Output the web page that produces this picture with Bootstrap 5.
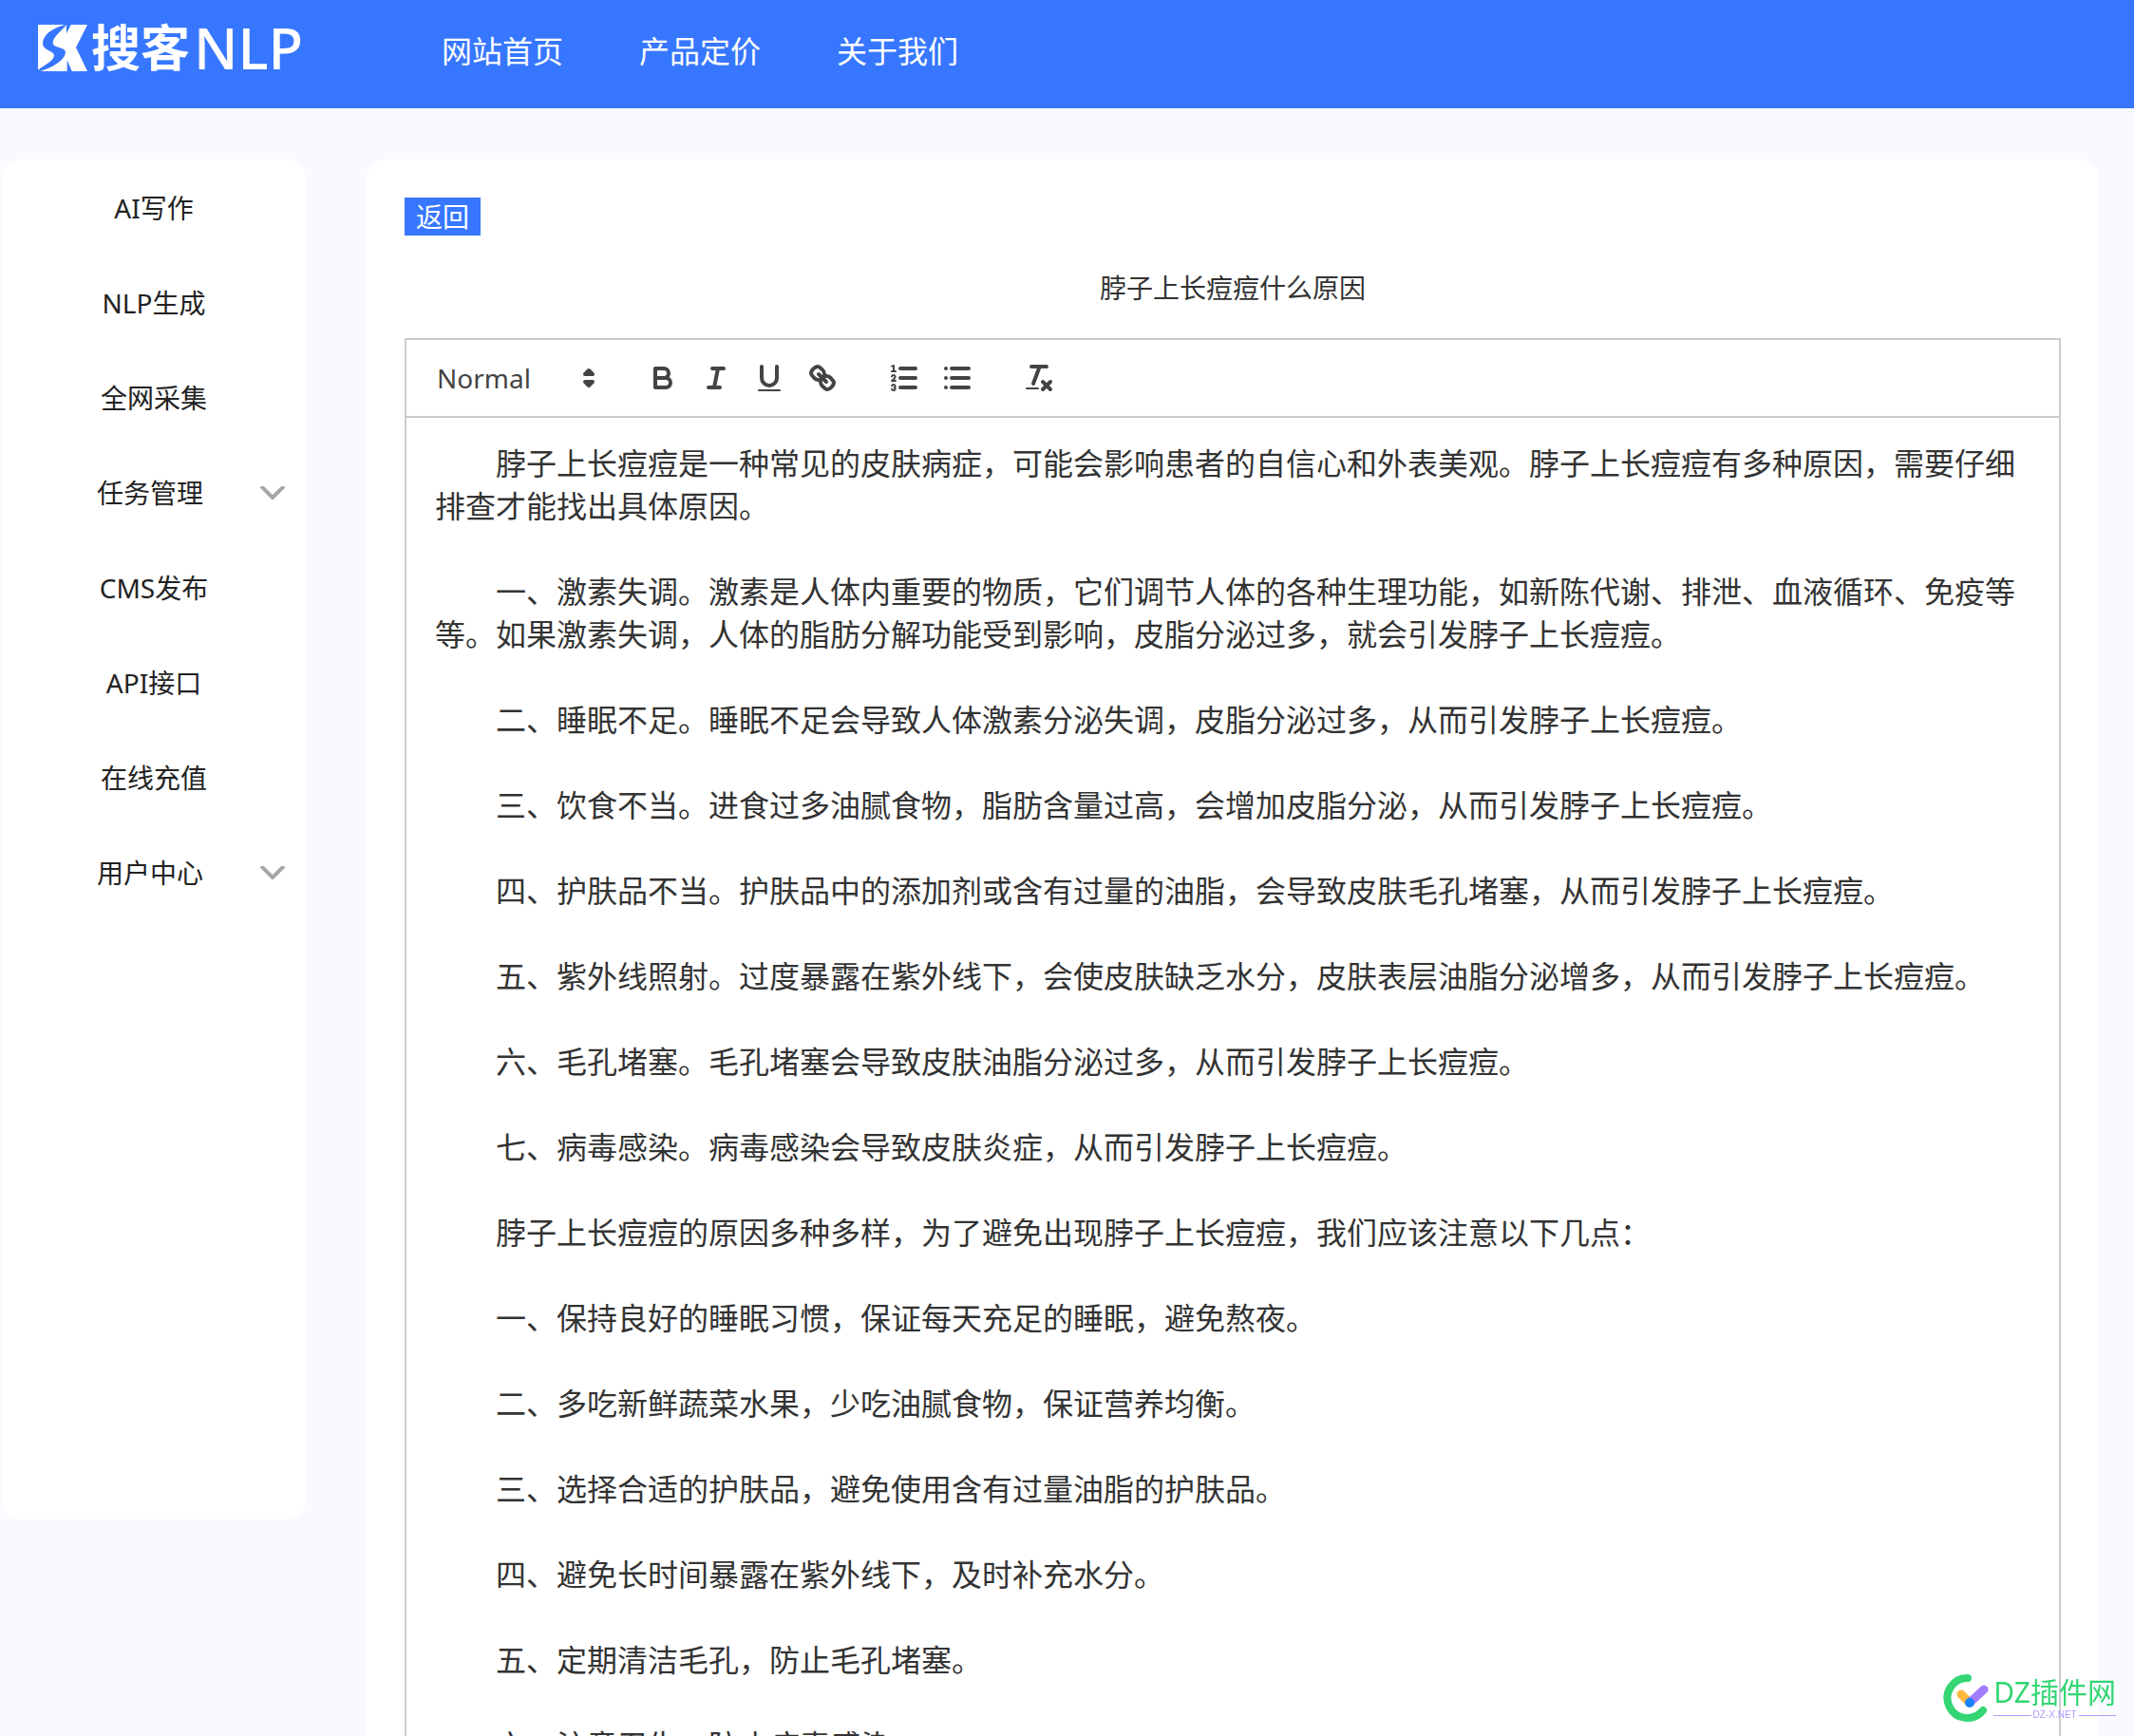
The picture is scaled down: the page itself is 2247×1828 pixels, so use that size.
<!DOCTYPE html>
<html lang="zh-CN">
<head>
<meta charset="utf-8">
<meta name="viewport" content="width=device-width, initial-scale=1">
<title>搜客NLP</title>
<link href="https://cdn.jsdelivr.net/npm/bootstrap@5.3.0/dist/css/bootstrap.min.css" rel="stylesheet">
<style>
:root { --brand: #3777ff; --edge: #ccc; --ink: #444; }
body { background: #f8faff; color: #333; font-family: "Noto Sans", "Noto Sans CJK SC", sans-serif; font-size: 28px; line-height: 40px; }
.topbar { background: var(--brand); height: 114px; padding: 0 40px; }
.brand-link { width: 425px; height: 100px; gap: 4px; color: #fff; }
.brand-cn { font-size: 52px; font-weight: 700; line-height: 60px; }
.brand-en { font-size: 60px; font-weight: 500; line-height: 60px; }
.topnav { gap: 80px; height: 108px; }
.topnav .nav-link { color: #fff; font-size: 32px; padding: 0; }
.workspace { padding: 54px 37px 0 2px; gap: 64px; }
.side-panel { width: 320px; height: 1432px; border-radius: 20px; }
.side-panel .nav-link { height: 100px; color: #222; padding: 2px 22px 0 14px; }
.main-panel { border-radius: 20px 20px 0 0; padding: 40px; min-width: 0; }
.btn-back { background: var(--brand); color: #fff; font-size: 28px; line-height: 40px; padding: 0 12px; border: 0; border-radius: 0; }
.btn-back:hover { background: #2a66e6; color: #fff; }
.doc-title { font-size: 28px; font-weight: 400; line-height: 40px; padding: 35px 0 33px; margin: 0; }
.editor-box { border: 2px solid var(--edge); }
.tools { border-bottom: 2px solid var(--edge); padding: 16px; gap: 30px; }
.picker { width: 196px; }
.picker select { appearance: none; border: 0; background: none; color: var(--ink); width: 100%; height: 48px; padding: 0 16px; font-size: 28px; line-height: 48px; }
.picker svg { right: 2px; top: 6px; pointer-events: none; }
.tool { width: 56px; height: 48px; padding: 6px 10px; border: 0; border-radius: 0; line-height: 1; }
.tool svg, .picker svg { width: 36px; height: 36px; display: block; }
.ic { fill: none; stroke: var(--ink); stroke-width: 2; stroke-linecap: round; stroke-linejoin: round; }
.ic .solid { fill: var(--ink); stroke: none; }
.ic .thin { stroke-width: 1; }
.ic .filled { fill: var(--ink); }
.doc-text { padding: 25px 30px; font-size: 32px; line-height: 45px; outline: 0; }
.doc-text p { margin: 0 0 45px; text-indent: 2em; }
.site-stamp { right: 19px; bottom: 15px; gap: 3px; }
.stamp-name { color: #33d673; font-size: 30px; line-height: 36px; }
.stamp-sub { color: #b49bff; font: 10px/12px "Liberation Sans", sans-serif; gap: 2px; }
.stamp-sub i { height: 1px; background: #b49bff; }
</style>
<script src="https://cdn.jsdelivr.net/npm/bootstrap@5.3.0/dist/js/bootstrap.bundle.min.js"></script>
</head>
<body class="vh-100 overflow-hidden d-flex flex-column">

<header class="topbar d-flex align-items-start flex-shrink-0">
  <a href="#" class="brand-link d-flex align-items-center text-decoration-none flex-shrink-0">
    <svg width="52" height="49" viewBox="0 0 156 147" fill="#fff" aria-hidden="true">
      <path d="M0 0H85C40 12 15 35 15 60C15 80 51 84 51 97C50 115 20 128 0 143Z"/>
      <path d="M90 0V28L104 0H156L120 72L156 147H107L92 112V147H8C60 130 87 105 87 86C86 70 48 75 47 57C47 40 70 24 90 0Z"/>
    </svg>
    <span class="brand-cn">搜客</span><span class="brand-en">NLP</span>
  </a>
  <nav class="topnav nav align-items-center" aria-label="主导航">
    <a class="nav-link" href="#">网站首页</a>
    <a class="nav-link" href="#">产品定价</a>
    <a class="nav-link" href="#">关于我们</a>
  </nav>
</header>

<div class="workspace d-flex flex-grow-1 align-items-start">
  <aside class="side-panel bg-white flex-shrink-0">
    <nav class="nav flex-column" aria-label="功能菜单">
      <a class="nav-link d-flex align-items-center justify-content-center px-0" href="#">AI写作</a>
      <a class="nav-link d-flex align-items-center justify-content-center px-0" href="#">NLP生成</a>
      <a class="nav-link d-flex align-items-center justify-content-center px-0" href="#">全网采集</a>
      <a class="nav-link d-flex align-items-center" href="#"><span class="col"></span>任务管理<span class="col d-flex justify-content-end"><svg width="26" height="14" viewBox="0 0 26 14" fill="none" stroke="#a6a6a6" stroke-width="4"><path d="M1 0L13 12L25 0"/></svg></span></a>
      <a class="nav-link d-flex align-items-center justify-content-center px-0" href="#">CMS发布</a>
      <a class="nav-link d-flex align-items-center justify-content-center px-0" href="#">API接口</a>
      <a class="nav-link d-flex align-items-center justify-content-center px-0" href="#">在线充值</a>
      <a class="nav-link d-flex align-items-center" href="#"><span class="col"></span>用户中心<span class="col d-flex justify-content-end"><svg width="26" height="14" viewBox="0 0 26 14" fill="none" stroke="#a6a6a6" stroke-width="4"><path d="M1 0L13 12L25 0"/></svg></span></a>
    </nav>
  </aside>

  <main class="main-panel bg-white flex-grow-1">
    <button type="button" class="btn btn-back d-block">返回</button>
    <h1 class="doc-title text-center">脖子上长痘痘什么原因</h1>
    <div class="editor-box">
      <div class="tools d-flex" role="toolbar" aria-label="编辑工具">
        <div class="picker position-relative">
          <select aria-label="段落格式"><option>Normal</option><option>Heading 1</option><option>Heading 2</option></select>
          <svg class="ic position-absolute" viewBox="0 0 18 18"><polygon class="filled" points="7 11 9 13 11 11"/><polygon class="filled" points="7 7 9 5 11 7"/></svg>
        </div>
        <div class="d-flex">
          <button type="button" class="btn tool" aria-label="粗体"><svg class="ic" viewBox="0 0 18 18"><path d="M5,4H9.500A2.500,2.500,0,0,1,12,6.500A2.500,2.500,0,0,1,9.500,9H5Z"/><path d="M5,9h5.500A2.500,2.500,0,0,1,13,11.500A2.500,2.500,0,0,1,10.500,14H5Z"/></svg></button>
          <button type="button" class="btn tool" aria-label="斜体"><svg class="ic" viewBox="0 0 18 18"><path d="M7 4H13M5 14H11M8 14L10 4"/></svg></button>
          <button type="button" class="btn tool" aria-label="下划线"><svg class="ic" viewBox="0 0 18 18"><path d="M5,3V9a4.012,4.012,0,0,0,4,4H9a4.012,4.012,0,0,0,4-4V3"/><rect class="solid" height="1" rx="0.5" ry="0.5" width="12" x="3" y="15"/></svg></button>
          <button type="button" class="btn tool" aria-label="链接"><svg class="ic" viewBox="0 0 18 18"><path d="M7 7L11 11"/><path d="M8.900,4.577a3.476,3.476,0,0,1,.36,4.679A3.476,3.476,0,0,1,4.577,8.900C3.185,7.500,2.035,6.400,4.217,4.217S7.500,3.185,8.900,4.577Z"/><path d="M13.423,9.100a3.476,3.476,0,0,0-4.679-.36,3.476,3.476,0,0,0,.36,4.679c1.392,1.392,2.500,2.542,4.679.36S14.815,10.500,13.423,9.100Z"/></svg></button>
        </div>
        <div class="d-flex">
          <button type="button" class="btn tool" aria-label="有序列表"><svg class="ic" viewBox="0 0 18 18"><path d="M7 4H15M7 9H15M7 14H15"/><path class="thin" d="M2.500 5.500H4.500"/><path class="solid" d="M3.500,6A0.500,0.500,0,0,1,3,5.500V3.085l-0.276.138A0.500,0.500,0,0,1,2.053,3c-0.124-.247-0.023-0.324.224-0.447l1-.5A0.500,0.500,0,0,1,4,2.500v3A0.500,0.500,0,0,1,3.500,6Z"/><path class="thin" d="M4.500,10.500h-2c0-.234,1.850-1.076,1.850-2.234A0.959,0.959,0,0,0,2.500,8.156"/><path class="thin" d="M2.500,14.846a0.959,0.959,0,0,0,1.850-.109A0.700,0.700,0,0,0,3.750,14a0.688,0.688,0,0,0,.6-0.736,0.959,0.959,0,0,0-1.850-.109"/></svg></button>
          <button type="button" class="btn tool" aria-label="无序列表"><svg class="ic" viewBox="0 0 18 18"><path d="M6 4H15M6 9H15M6 14H15M3 4H3M3 9H3M3 14H3"/></svg></button>
        </div>
        <button type="button" class="btn tool" aria-label="清除格式"><svg class="ic" viewBox="0 0 18 18"><path d="M5 3H13M6 12L9.350 3M11 11L15 15M15 11L11 15"/><rect class="solid" height="1" rx="0.5" ry="0.5" width="7" x="2" y="14"/></svg></button>
      </div>
      <div class="doc-text" contenteditable="true" spellcheck="false" role="textbox" aria-multiline="true" aria-label="正文">
        <p>脖子上长痘痘是一种常见的皮肤病症，可能会影响患者的自信心和外表美观。脖子上长痘痘有多种原因，需要仔细排查才能找出具体原因。</p>
        <p>一、激素失调。激素是人体内重要的物质，它们调节人体的各种生理功能，如新陈代谢、排泄、血液循环、免疫等等。如果激素失调，人体的脂肪分解功能受到影响，皮脂分泌过多，就会引发脖子上长痘痘。</p>
        <p>二、睡眠不足。睡眠不足会导致人体激素分泌失调，皮脂分泌过多，从而引发脖子上长痘痘。</p>
        <p>三、饮食不当。进食过多油腻食物，脂肪含量过高，会增加皮脂分泌，从而引发脖子上长痘痘。</p>
        <p>四、护肤品不当。护肤品中的添加剂或含有过量的油脂，会导致皮肤毛孔堵塞，从而引发脖子上长痘痘。</p>
        <p>五、紫外线照射。过度暴露在紫外线下，会使皮肤缺乏水分，皮肤表层油脂分泌增多，从而引发脖子上长痘痘。</p>
        <p>六、毛孔堵塞。毛孔堵塞会导致皮肤油脂分泌过多，从而引发脖子上长痘痘。</p>
        <p>七、病毒感染。病毒感染会导致皮肤炎症，从而引发脖子上长痘痘。</p>
        <p>脖子上长痘痘的原因多种多样，为了避免出现脖子上长痘痘，我们应该注意以下几点：</p>
        <p>一、保持良好的睡眠习惯，保证每天充足的睡眠，避免熬夜。</p>
        <p>二、多吃新鲜蔬菜水果，少吃油腻食物，保证营养均衡。</p>
        <p>三、选择合适的护肤品，避免使用含有过量油脂的护肤品。</p>
        <p>四、避免长时间暴露在紫外线下，及时补充水分。</p>
        <p>五、定期清洁毛孔，防止毛孔堵塞。</p>
        <p>六、注意卫生，防止病毒感染。</p>
      </div>
    </div>
  </main>
</div>

<div class="site-stamp position-fixed d-flex align-items-center">
  <svg width="50" height="50" viewBox="0 0 50 50" fill="none" stroke-linecap="round" aria-hidden="true">
    <path d="M26 4A21 21 0 1 0 42 38" stroke="#33d673" stroke-width="8"/>
    <path d="M19 21L28 30" stroke="#ffb83d" stroke-width="9"/>
    <path d="M43 16L29 29" stroke="#a47dff" stroke-width="9"/>
    <circle cx="28" cy="30" r="5" fill="#1684fc"/>
  </svg>
  <div>
    <div class="stamp-name">DZ插件网</div>
    <div class="stamp-sub d-flex align-items-center"><i class="flex-grow-1"></i>DZ-X.NET<i class="flex-grow-1"></i></div>
  </div>
</div>
</body>
</html>
